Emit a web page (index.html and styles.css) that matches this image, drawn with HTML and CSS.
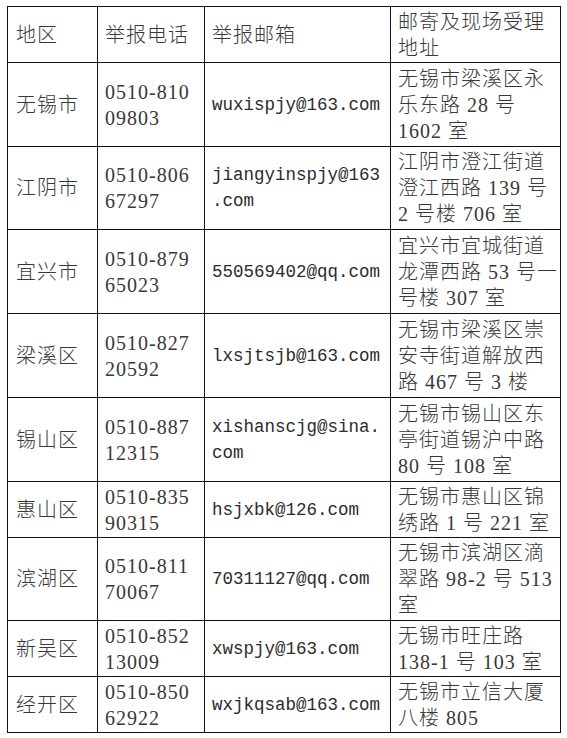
FILE: index.html
```html
<!DOCTYPE html>
<html lang="zh-CN">
<head>
<meta charset="utf-8">
<title>举报电话</title>
<link rel="stylesheet" href="styles.css">
</head>
<body>
<table class="report">
  <colgroup>
    <col class="c-area">
    <col class="c-phone">
    <col class="c-mail">
    <col class="c-addr">
  </colgroup>
  <tbody>
    <tr class="h56">
      <td>地区</td>
      <td>举报电话</td>
      <td>举报邮箱</td>
      <td>邮寄及现场受理<br>地址</td>
    </tr>
    <tr class="h84">
      <td>无锡市</td>
      <td>0510-810<br>09803</td>
      <td class="mail">wuxispjy@163.com</td>
      <td>无锡市梁溪区永<br>乐东路 28 号<br>1602 室</td>
    </tr>
    <tr class="h83">
      <td>江阴市</td>
      <td>0510-806<br>67297</td>
      <td class="mail">jiangyinspjy@163<br>.com</td>
      <td>江阴市澄江街道<br>澄江西路 139 号<br>2 号楼 706 室</td>
    </tr>
    <tr class="h84">
      <td>宜兴市</td>
      <td>0510-879<br>65023</td>
      <td class="mail">550569402@qq.com</td>
      <td>宜兴市宜城街道<br>龙潭西路 53 号一<br>号楼 307 室</td>
    </tr>
    <tr class="h84">
      <td>梁溪区</td>
      <td>0510-827<br>20592</td>
      <td class="mail">lxsjtsjb@163.com</td>
      <td>无锡市梁溪区崇<br>安寺街道解放西<br>路 467 号 3 楼</td>
    </tr>
    <tr class="h84">
      <td>锡山区</td>
      <td>0510-887<br>12315</td>
      <td class="mail">xishanscjg@sina.<br>com</td>
      <td>无锡市锡山区东<br>亭街道锡沪中路<br>80 号 108 室</td>
    </tr>
    <tr class="h56">
      <td>惠山区</td>
      <td>0510-835<br>90315</td>
      <td class="mail">hsjxbk@126.com</td>
      <td>无锡市惠山区锦<br>绣路 1 号 221 室</td>
    </tr>
    <tr class="h83">
      <td>滨湖区</td>
      <td>0510-811<br>70067</td>
      <td class="mail">70311127@qq.com</td>
      <td>无锡市滨湖区滴<br>翠路 98-2 号 513<br>室</td>
    </tr>
    <tr class="h56">
      <td>新吴区</td>
      <td>0510-852<br>13009</td>
      <td class="mail">xwspjy@163.com</td>
      <td>无锡市旺庄路<br>138-1 号 103 室</td>
    </tr>
    <tr class="h56">
      <td>经开区</td>
      <td>0510-850<br>62922</td>
      <td class="mail">wxjkqsab@163.com</td>
      <td>无锡市立信大厦<br>八楼 805</td>
    </tr>
  </tbody>
</table>
</body>
</html>
```

FILE: styles.css
```css
html, body {
  margin: 0;
  padding: 0;
  background: #ffffff;
}

body {
  padding: 6px 0 0 7px;
}

.report {
  border-collapse: collapse;
  table-layout: fixed;
  width: 553px;
  font-family: "Liberation Serif", "Noto Sans CJK SC", serif;
  font-size: 20px;
  letter-spacing: 1px;
  line-height: 26px;
  color: #383838;
}

.c-area { width: 90px; }
.c-phone { width: 107px; }
.c-mail { width: 186px; }
.c-addr { width: 170px; }

.report td {
  border: 1px solid #111;
  padding: 0 0 0 7px;
  vertical-align: middle;
  white-space: nowrap;
  overflow: hidden;
  font-weight: 300;
}

.report td:first-child {
  padding-left: 8px;
}

.report td.mail {
  font-family: "Liberation Mono", "Noto Sans CJK SC", monospace;
  font-size: 17.5px;
  letter-spacing: 0;
  color: #2b2b2b;
}

.h56 { height: 56px; }
.h83 { height: 83px; }
.h84 { height: 84px; }
```
